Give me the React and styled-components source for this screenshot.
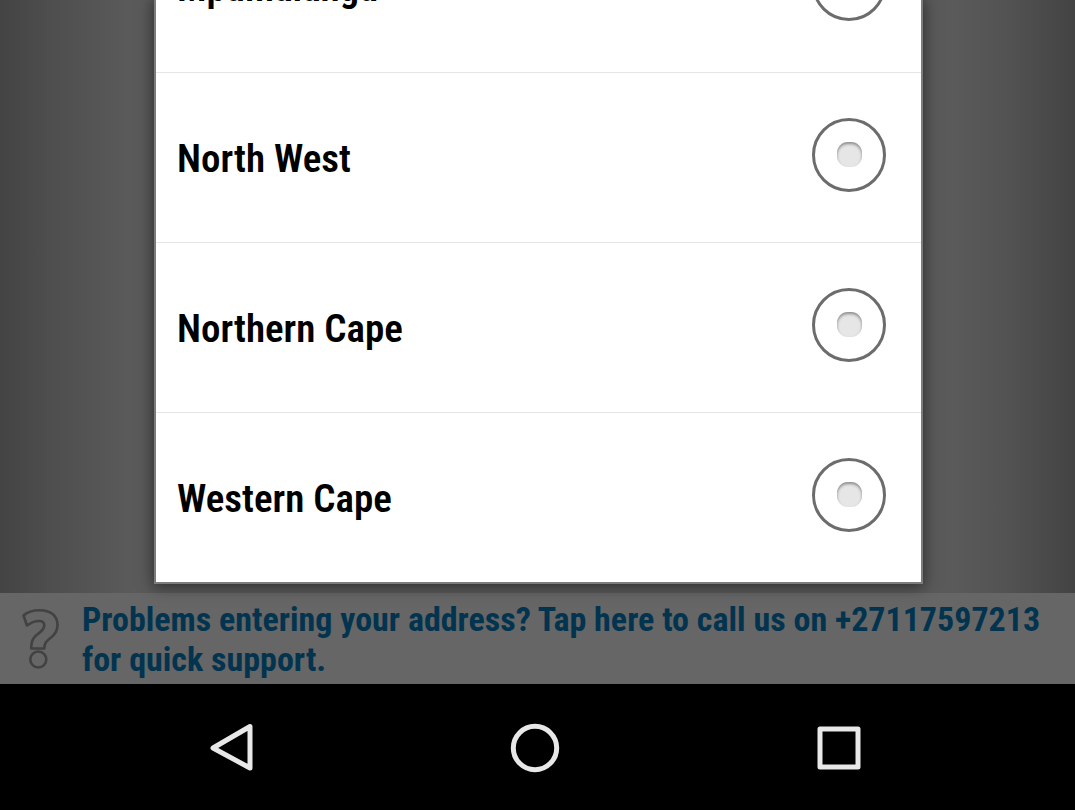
import React from "react";
import styled, { createGlobalStyle } from "styled-components";

const GlobalStyle = createGlobalStyle`
  * { box-sizing: border-box; }
  body { margin: 0; background: #000; }
  button, input { font: inherit; }
`;

const Screen = styled.div`
  height: 100vh;
  display: flex;
  flex-direction: column;
  font-family: "Roboto Condensed", "Liberation Sans Narrow", "Liberation Sans", sans-serif;
  font-weight: 600;
`;

const Stage = styled.main`
  flex: 1;
  min-height: 0;
  display: flex;
  padding: 0 154px 11px 156px;
  background: linear-gradient(
    90deg,
    #444 0, #484848 24px, #4e4e4e 50px, #545454 90px, #5a5a5a 128px,
    #5a5a5a calc(100% - 120px), #535353 calc(100% - 70px),
    #4a4a4a calc(100% - 30px), #434343 100%
  );
`;

const Dialog = styled.fieldset`
  position: relative;
  z-index: 1;
  flex: 1;
  min-width: 0;
  margin: 0;
  padding: 0;
  border: 0;
  overflow: hidden;
  background: #fff;
  box-shadow: 0 0 0 2px #7c7c7c, 0 2px 14px 3px rgba(0, 0, 0, 0.5);
`;

const OptionList = styled.div`
  height: 100%;
  display: flex;
  flex-direction: column;
  justify-content: flex-end;
`;

const Option = styled.label`
  flex: none;
  height: 170px;
  display: flex;
  align-items: center;
  justify-content: space-between;
  padding: 2px 35px 0 21px;
  font-size: 39px;
  line-height: 48px;
  color: #000;

  & + & { border-top: 1px solid #e6e6e6; }
`;

const Radio = styled.input`
  appearance: none;
  flex: none;
  display: grid;
  place-items: center;
  width: 74px;
  height: 74px;
  margin: 0 0 8px;
  border: 3px solid #6c6c6c;
  border-radius: 50%;

  &::before {
    content: "";
    width: 25px;
    height: 25px;
    border-radius: 11px;
    background: #e6e6e6;
    box-shadow: inset 0 2px 3px #8c8c8c;
  }
`;

const Support = styled.a`
  flex: none;
  display: flex;
  align-items: center;
  gap: 22px;
  padding: 6px 24px 5px 22px;
  background: #666;
  color: #03344f;
  font-size: 34px;
  font-weight: 700;
  line-height: 40px;
  text-decoration: none;
`;

const QuestionIcon = styled.svg`
  flex: none;
  width: 38px;
  height: 62px;
`;

const NavBar = styled.nav`
  flex: none;
  height: 126px;
  display: grid;
  grid-template-columns: repeat(3, 1fr);
  padding: 1px 84px 0 80px;
  background: #000;
`;

const NavButton = styled.button`
  display: grid;
  place-items: center;
  padding: 0;
  border: 0;
  background: none;
`;

const NavIcon = styled.svg`
  width: 50px;
  height: 50px;
  fill: none;
  stroke: #e8e8e8;
  stroke-width: 5;
  stroke-linejoin: round;
`;

const provinces = ["Mpumalanga", "North West", "Northern Cape", "Western Cape"];

export default function App() {
  return (
    <Screen>
      <GlobalStyle />
      <Stage>
        <Dialog aria-label="Province">
          <OptionList>
            {provinces.map((name) => (
              <Option key={name}>
                <span>{name}</span>
                <Radio type="radio" name="province" value={name} />
              </Option>
            ))}
          </OptionList>
        </Dialog>
      </Stage>
      <Support href="tel:+27117597213">
        <QuestionIcon viewBox="0 0 38 62" fill="none" stroke="#424242" strokeWidth="2.6" strokeLinejoin="round" aria-hidden="true">
          <path d="M1.500 7.500C6 3.500 12 2.300 17.500 2.300C28.500 2.300 35.500 7.500 35.500 17C35.500 23 33 26.500 29 29.500C24.500 33 22.300 35 22.300 40.500H9.300C9 34 10.500 30.500 14 27.500C18.500 24 22.300 21.500 22.300 17.500C22.300 14.500 20 13 17 13C13 13 9 14.500 5 17.500Z" />
          <circle cx="16.300" cy="51.500" r="8" />
        </QuestionIcon>
        <span>Problems entering your address? Tap here to call us on +27117597213 for quick support.</span>
      </Support>
      <NavBar aria-label="System">
        <NavButton type="button" aria-label="Back">
          <NavIcon viewBox="0 0 50 50"><path d="M43 3.500V45L6 25Z" /></NavIcon>
        </NavButton>
        <NavButton type="button" aria-label="Home">
          <NavIcon viewBox="0 0 50 50"><circle cx="25" cy="25" r="21.700" /></NavIcon>
        </NavButton>
        <NavButton type="button" aria-label="Recent apps">
          <NavIcon viewBox="0 0 50 50"><rect x="6" y="6" width="38" height="38" /></NavIcon>
        </NavButton>
      </NavBar>
    </Screen>
  );
}
